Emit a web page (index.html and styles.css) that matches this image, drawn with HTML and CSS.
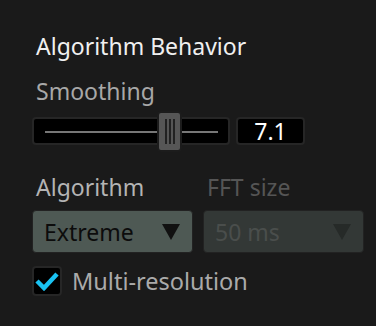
FILE: index.html
```html
<!DOCTYPE html>
<html lang="en">
<head>
    <meta charset="UTF-8">
    <title>Algorithm Behavior</title>
    <link rel="stylesheet" href="styles.css">
</head>
<body>
    <div class="panel">
        <div class="title">Algorithm Behavior</div>

        <div class="label">Smoothing</div>
        <div class="slider-row">
            <div class="slider">
                <div class="track"></div>
                <div class="thumb">
                    <span></span><span></span><span></span>
                </div>
            </div>
            <div class="value">7.1</div>
        </div>

        <div class="select-row">
            <div class="field">
                <div class="label">Algorithm</div>
                <div class="select">
                    <span>Extreme</span>
                    <span class="arrow"></span>
                </div>
            </div>
            <div class="field disabled">
                <div class="label">FFT size</div>
                <div class="select">
                    <span>50 ms</span>
                    <span class="arrow"></span>
                </div>
            </div>
        </div>

        <label class="check-row">
            <span class="checkbox">
                <svg width="24" height="20" viewBox="0 0 24 20">
                    <path d="M2 10 L9 17 L22 3" fill="none" stroke="#19c2f2" stroke-width="4.5" stroke-linejoin="miter"/>
                </svg>
            </span>
            <span class="check-text">Multi-resolution</span>
        </label>
    </div>
</body>
</html>
```

FILE: styles.css
```css
* {
    margin: 0;
    padding: 0;
    box-sizing: border-box;
}

body {
    font-family: "Noto Sans", "Open Sans", sans-serif;
    background-color: #1a1a1a;
    width: 376px;
    height: 326px;
    overflow: hidden;
}

.panel {
    padding: 30px 12px 0 32px;
}

.title {
    color: #f0f0f0;
    font-size: 23px;
    line-height: 32px;
    padding-left: 4px;
    margin-bottom: 14px;
}

.label {
    color: #a8a8a8;
    font-size: 23px;
    line-height: 30px;
    padding-left: 4px;
}

.slider-row {
    display: flex;
    align-items: center;
    gap: 6px;
    margin-top: 4px;
    height: 42px;
}

.slider {
    position: relative;
    width: 198px;
    height: 28px;
    background: #000;
    border: 2px solid #262626;
    border-radius: 4px;
}

.track {
    position: absolute;
    left: 11px;
    right: 10px;
    top: 12px;
    height: 2px;
    background: #777;
}

.thumb {
    position: absolute;
    left: 123px;
    top: -8px;
    width: 25px;
    height: 41px;
    background: #565656;
    border: 2px solid #1c1c1c;
    border-radius: 4px;
    display: flex;
    justify-content: center;
    align-items: center;
    gap: 2px;
}

.thumb span {
    width: 2px;
    height: 25px;
    background: #222;
}

.value {
    width: 69px;
    height: 28px;
    background: #000;
    border: 2px solid #262626;
    border-radius: 4px;
    color: #fff;
    font-size: 23px;
    line-height: 24px;
    text-align: center;
}

.select-row {
    display: flex;
    gap: 10px;
    margin-top: 20px;
}

.field {
    width: 161px;
}

.field .label {
    color: #b4b4b4;
}

.select {
    display: flex;
    justify-content: space-between;
    align-items: center;
    height: 43px;
    margin-top: 8px;
    padding: 0 12px 0 11px;
    background: #4e5954;
    border: 1px solid #222;
    border-radius: 4px;
    color: #0c0c0c;
    font-size: 23px;
}

.arrow {
    width: 0;
    height: 0;
    border-left: 9px solid transparent;
    border-right: 9px solid transparent;
    border-top: 16px solid #111;
}

.disabled .label {
    color: #555;
}

.disabled .select {
    background: #333836;
    color: #4a4e4c;
}

.disabled .arrow {
    border-top-color: #262a28;
}

.check-row {
    display: flex;
    align-items: center;
    gap: 10px;
    margin-top: 12px;
}

.checkbox {
    display: flex;
    align-items: center;
    justify-content: center;
    width: 30px;
    height: 30px;
    background: #000;
    border: 2px solid #262626;
    border-radius: 4px;
}

.check-text {
    color: #aaa;
    font-size: 23.5px;
}
```
